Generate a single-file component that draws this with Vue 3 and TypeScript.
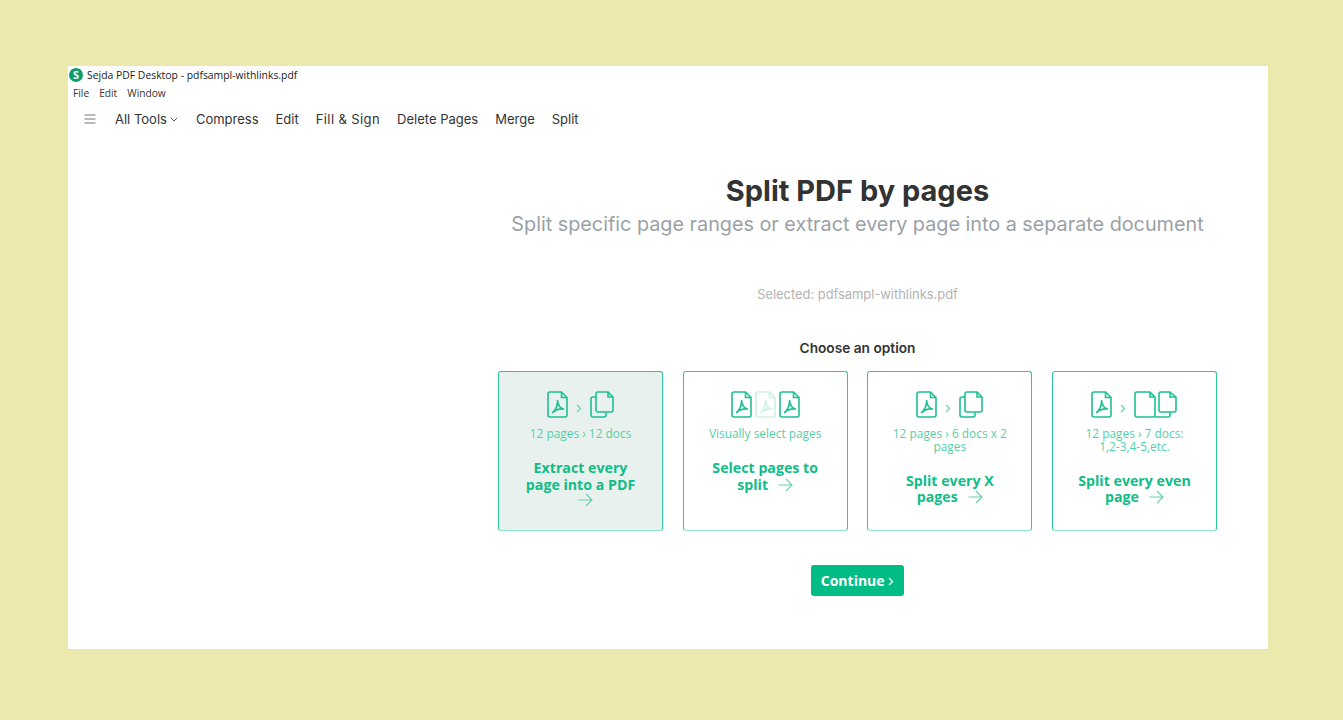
<template>
  <div class="page">
    <div class="window">
      <div class="titlebar">
        <span class="app-logo">S</span>
        <span>Sejda PDF Desktop - pdfsampl-withlinks.pdf</span>
      </div>
      <div class="menubar">
        <span v-for="item in menu" :key="item">{{ item }}</span>
      </div>
      <nav class="nav">
        <svg class="burger" width="12" height="10" viewBox="0 0 12 10">
          <path d="M0.5 1h11M0.5 5h11M0.5 9h11" stroke="#777" stroke-width="1" fill="none" />
        </svg>
        <span class="nav-all">
          All Tools
          <svg width="8" height="5" viewBox="0 0 8 5">
            <path d="M0.7 0.8 4 4l3.3-3.2" stroke="#555" stroke-width="1" fill="none" />
          </svg>
        </span>
        <a v-for="link in links" :key="link">{{ link }}</a>
      </nav>

      <main class="content">
        <h1>Split PDF by pages</h1>
        <p class="subtitle">Split specific page ranges or extract every page into a separate document</p>
        <p class="selected">Selected: pdfsampl-withlinks.pdf</p>
        <p class="choose">Choose an option</p>

        <div class="options">
          <div
            v-for="opt in options"
            :key="opt.title"
            class="option"
            :class="{ active: opt.active }"
          >
            <div class="icons">
              <template v-for="(icon, i) in opt.icons" :key="i">
                <svg v-if="icon === 'pdf' || icon === 'faded'" class="ic" :class="{ faded: icon === 'faded' }" width="21" height="27" viewBox="0 0 21 27">
                  <path d="M3 1h11.5L20 6.5V24a2 2 0 0 1-2 2H3a2 2 0 0 1-2-2V3a2 2 0 0 1 2-2Z" />
                  <path d="M14.5 1v5.5H20" />
                  <path d="M10.5 9c.5 5-2 10-5.5 13 3-3 8-4.500 12-4-3-.5-6-3-6.500-9Z" />
                </svg>
                <svg v-else-if="icon === 'docs'" class="ic" width="24" height="27" viewBox="0 0 24 27">
                  <path d="M8 1h10l5 5v13a2 2 0 0 1-2 2H8a2 2 0 0 1-2-2V3a2 2 0 0 1 2-2Z" />
                  <path d="M18 1v5h5" />
                  <path d="M6 6H3a2 2 0 0 0-2 2v16a2 2 0 0 0 2 2h11a2 2 0 0 0 2-2v-3" />
                </svg>
                <svg v-else-if="icon === 'pair'" class="ic" width="43" height="27" viewBox="0 0 43 27">
                  <path d="M3 1h13l5 5v18a2 2 0 0 1-2 2H3a2 2 0 0 1-2-2V3a2 2 0 0 1 2-2Z" />
                  <path d="M16 1v5h5" />
                  <path d="M27 1h9l6 5v13a2 2 0 0 1-2 2H27a2 2 0 0 1-2-2V3a2 2 0 0 1 2-2Z" />
                  <path d="M36 1v5h6" />
                  <path d="M21 26h13a2 2 0 0 0 2-2v-3" />
                </svg>
                <span v-else class="gt">
                  <svg width="6" height="9" viewBox="0 0 6 9"><path d="M1 1l3.6 3.5L1 8" /></svg>
                </span>
              </template>
            </div>
            <div class="desc">
              <span v-for="line in opt.desc" :key="line">{{ line }}</span>
            </div>
            <div class="name">
              <span v-for="(line, i) in opt.title.split('|')" :key="i" class="name-line">{{ line }}</span>
              <svg class="arrow" :class="{ block: opt.arrowBlock }" width="15" height="14" viewBox="0 0 15 14">
                <path d="M0.5 7h13.5M8 1l6 6-6 6" />
              </svg>
            </div>
          </div>
        </div>

        <button class="continue">Continue <span class="chev">
          <svg width="6" height="9" viewBox="0 0 6 9"><path d="M1 1l3.6 3.5L1 8" /></svg>
        </span></button>
      </main>
    </div>
  </div>
</template>

<script setup lang="ts">
interface Option {
  title: string
  desc: string[]
  icons: string[]
  active?: boolean
  arrowBlock?: boolean
}

const menu = ['File', 'Edit', 'Window']
const links = ['Compress', 'Edit', 'Fill & Sign', 'Delete Pages', 'Merge', 'Split']

const options: Option[] = [
  {
    title: 'Extract every|page into a PDF',
    desc: ['12 pages › 12 docs'],
    icons: ['pdf', 'gt', 'docs'],
    active: true,
    arrowBlock: true,
  },
  {
    title: 'Select pages to|split',
    desc: ['Visually select pages'],
    icons: ['pdf', 'faded', 'pdf'],
  },
  {
    title: 'Split every X|pages',
    desc: ['12 pages › 6 docs x 2', 'pages'],
    icons: ['pdf', 'gt', 'docs'],
  },
  {
    title: 'Split every even|page',
    desc: ['12 pages › 7 docs:', '1,2-3,4-5,etc.'],
    icons: ['pdf', 'gt', 'pair'],
  },
]
</script>

<style>
html,
body {
  margin: 0;
  background: #ebe9ae;
}
</style>

<style scoped>
.page {
  height: 720px;
  padding: 66px 75px 71px 68px;
  box-sizing: border-box;
  font-family: "Open Sans", "Liberation Sans", sans-serif;
}

.window {
  height: 583px;
  background: #fff;
}

.titlebar {
  display: flex;
  align-items: center;
  gap: 4px;
  height: 18px;
  padding-left: 1px;
  font-size: 10.4px;
  color: #222;
}

.app-logo {
  width: 14px;
  height: 14px;
  border-radius: 50%;
  background: #0f9d6b;
  color: #fff;
  font-size: 11px;
  font-weight: 700;
  line-height: 14px;
  text-align: center;
}

.menubar {
  display: flex;
  gap: 10px;
  height: 18px;
  padding-left: 5px;
  font-size: 10.2px;
  line-height: 19px;
  color: #333;
}

.nav {
  display: flex;
  align-items: center;
  height: 34px;
  padding-left: 16px;
  font-family: Inter, sans-serif;
  font-size: 13px;
  color: #333;
}

.burger {
  margin-right: 19px;
}

.nav-all {
  display: flex;
  align-items: center;
  gap: 3px;
  margin-right: 18px;
}

.nav a {
  margin-right: 17px;
}

.nav a:nth-of-type(3) {
  letter-spacing: 0.4px;
}

.content {
  padding: 39px 51px 0 430px;
  display: flex;
  flex-direction: column;
  align-items: center;
}

h1 {
  margin: 0;
  font-family: Inter, sans-serif;
  font-size: 29px;
  line-height: 32px;
  font-weight: 700;
  color: #333;
}

.subtitle {
  margin: 3px 0 0;
  font-family: Inter, sans-serif;
  font-size: 19.8px;
  line-height: 28px;
  color: #9aa1a6;
  white-space: nowrap;
}

.selected {
  margin: 48px 0 0;
  font-family: Inter, sans-serif;
  font-size: 12.9px;
  line-height: 18px;
  color: #b3b3b3;
}

.choose {
  margin: 35px 0 0;
  font-family: Inter, sans-serif;
  font-size: 13.7px;
  line-height: 18px;
  font-weight: 600;
  color: #333;
}

.options {
  display: grid;
  grid-template-columns: repeat(4, 1fr);
  gap: 19.6px;
  width: 719px;
  margin-top: 14px;
}

.option {
  height: 160px;
  box-sizing: border-box;
  border: 1px solid #2cc79a;
  border-bottom-color: #8fe4ca;
  border-radius: 3px;
  padding: 19px 8px 0;
  display: flex;
  flex-direction: column;
  align-items: center;
  text-align: center;
}

.option.active {
  background: #e8f1ee;
}

.icons {
  display: flex;
  align-items: center;
  justify-content: center;
  gap: 3px;
  height: 27px;
}

.ic {
  fill: none;
  stroke: #1cc092;
  stroke-width: 1.6;
}

.ic.faded {
  stroke: #cdf1e6;
}

.gt {
  display: flex;
  margin: 8px 5px 0;
}

.gt path,
.chev path {
  fill: none;
  stroke: #6fd3b5;
  stroke-width: 1.3;
}

.desc {
  margin-top: 9px;
  display: flex;
  flex-direction: column;
  font-size: 11.9px;
  line-height: 12.5px;
  color: #54cfa9;
}

.name {
  margin-top: 20.5px;
  font-size: 14.2px;
  line-height: 16.5px;
  font-weight: 700;
  color: #10bd88;
}

.name-line {
  display: block;
}

.name-line:nth-last-of-type(1) {
  display: inline;
}

.arrow {
  margin-left: 10px;
  vertical-align: -2px;
  fill: none;
  stroke: #68cfae;
  stroke-width: 1.1;
}

.arrow.block {
  display: block;
  margin: 0 auto;
  transform: translateX(5px);
}

.continue {
  margin-top: 34px;
  width: 93px;
  height: 31px;
  border: 0;
  border-radius: 3px;
  background: #00bd85;
  color: #fff;
  font-family: "Open Sans", sans-serif;
  font-size: 14px;
  font-weight: 700;
  padding: 0;
}

.chev path {
  stroke: #fff;
}
</style>
